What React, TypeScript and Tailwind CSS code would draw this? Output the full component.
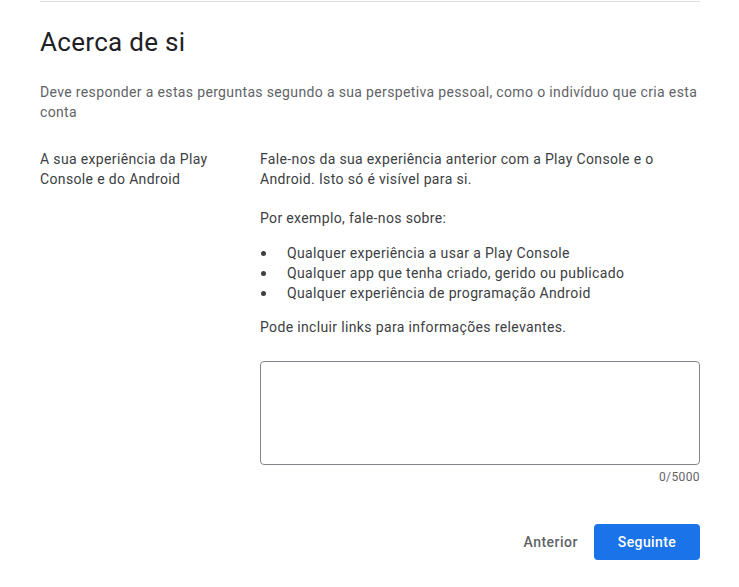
import React from 'react';

const bullets = [
  'Qualquer experiência a usar a Play Console',
  'Qualquer app que tenha criado, gerido ou publicado',
  'Qualquer experiência de programação Android',
];

export default function App() {
  return (
    <div className="min-h-screen bg-white font-['Roboto',sans-serif] text-sm tracking-[0.35px] text-[#3c4043]">
      <div className="ml-10 w-[660px] pt-px">
        {/* Divider */}
        <div className="h-px bg-[#dadce0]" />

        {/* Header */}
        <h1 className="mt-6 text-[26px] leading-8 tracking-[0.3px] text-[#202124]">Acerca de si</h1>
        <p className="mt-6 leading-5 text-[#5f6368]">
          Deve responder a estas perguntas segundo a sua perspetiva pessoal, como o indivíduo que cria esta conta
        </p>

        {/* Question row */}
        <div className="mt-[27px] flex">
          <div className="w-[220px] shrink-0 pr-6 leading-5">
            A sua experiência da Play Console e do Android
          </div>
          <div className="flex-1 leading-5">
            <p>Fale-nos da sua experiência anterior com a Play Console e o Android. Isto só é visível para si.</p>
            <p className="mt-[19px]">Por exemplo, fale-nos sobre:</p>
            <ul className="mt-[15px]">
              {bullets.map((b) => (
                <li key={b} className="flex items-center">
                  <span className="w-[27px] shrink-0 pl-px">
                    <span className="block h-[5px] w-[5px] rounded-full bg-[#3c4043]" />
                  </span>
                  {b}
                </li>
              ))}
            </ul>
            <p className="mt-[14px]">Pode incluir links para informações relevantes.</p>
            <textarea className="mt-6 block h-[104px] w-full resize-none rounded border border-[#80868b] p-3 outline-none" />
            <div className="mt-1 text-right text-xs leading-4 tracking-[0.4px] text-[#5f6368]">0/5000</div>
          </div>
        </div>

        {/* Actions */}
        <div className="mt-[39px] flex items-center justify-end">
          <button className="text-sm font-medium tracking-[0.5px] text-[#5f6368]">Anterior</button>
          <button className="ml-4 h-9 w-[106px] rounded bg-[#1a73e8] text-sm font-medium tracking-[0.4px] text-white">
            Seguinte
          </button>
        </div>
      </div>
    </div>
  );
}
